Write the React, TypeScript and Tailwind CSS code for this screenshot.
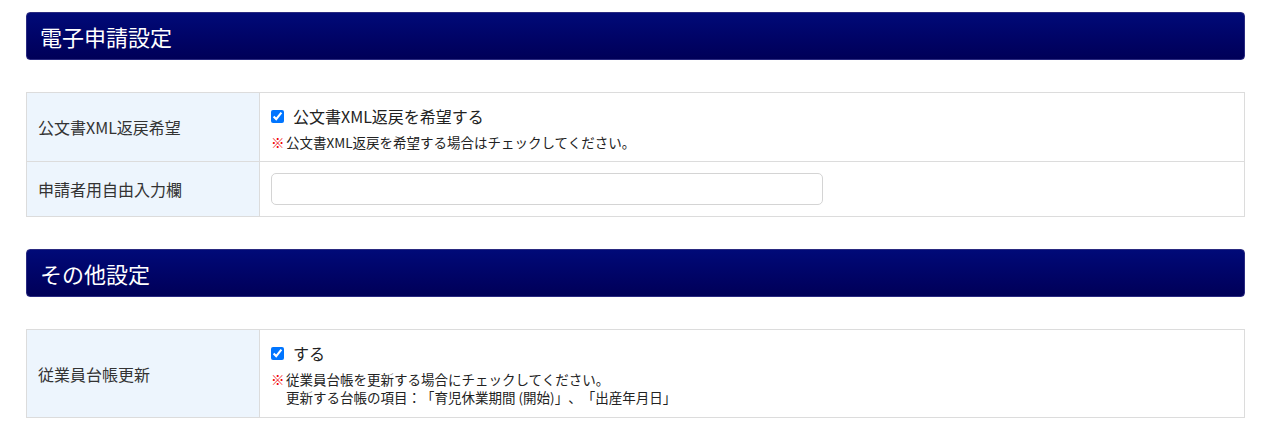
import React from "react";

const font = { fontFamily: '"Noto Sans CJK JP", "Noto Sans", sans-serif' };

function Header({ title }: { title: string }) {
  return (
    <div className="h-[48px] rounded-[4px] bg-gradient-to-b from-[#000a78] to-[#000058] border border-[#2a2a80] flex items-center pl-[13px]">
      <span className="text-white text-[22px] leading-none">{title}</span>
    </div>
  );
}

function Check({ label }: { label: string }) {
  return (
    <label className="flex items-center gap-[9px]">
      <input type="checkbox" defaultChecked className="w-[13px] h-[13px] m-0 accent-[#0075ff]" />
      <span className="text-[16px] text-[#222] leading-none">{label}</span>
    </label>
  );
}

function Mark() {
  return <span className="text-[#f00000] font-bold mr-[1.5px]">※</span>;
}

export default function App() {
  return (
    <div className="bg-white w-[1274px] h-[430px] pt-[12px] [text-spacing-trim:space-all]" style={font}>
      <div className="ml-[26px] w-[1219px]">
        <Header title="電子申請設定" />
        <div className="mt-[32px] border border-[#dcdcdc]">
          <div className="flex h-[69px] border-b border-[#dcdcdc]">
            <div className="w-[233px] shrink-0 bg-[#edf5fd] border-r border-[#dcdcdc] flex items-center pl-[11px] text-[16px] text-[#333]">
              公文書XML返戻希望
            </div>
            <div className="flex-1 pl-[11px] pt-[15px]">
              <Check label="公文書XML返戻を希望する" />
              <div className="mt-[9px] text-[13.5px] text-[#222] leading-[18px]">
                <Mark />公文書XML返戻を希望する場合はチェックしてください。
              </div>
            </div>
          </div>
          <div className="flex h-[54px]">
            <div className="w-[233px] shrink-0 bg-[#edf5fd] border-r border-[#dcdcdc] flex items-center pl-[11px] text-[16px] text-[#333]">
              申請者用自由入力欄
            </div>
            <div className="flex-1 pl-[11px] flex items-center">
              <input type="text" className="w-[552px] h-[32px] border border-[#d4d4d4] rounded-[5px] outline-none px-2" />
            </div>
          </div>
        </div>

        <div className="mt-[32px]">
          <Header title="その他設定" />
        </div>
        <div className="mt-[32px] border border-[#dcdcdc]">
          <div className="flex h-[87px]">
            <div className="w-[233px] shrink-0 bg-[#edf5fd] border-r border-[#dcdcdc] flex items-center pl-[11px] text-[16px] text-[#333]">
              従業員台帳更新
            </div>
            <div className="flex-1 pl-[11px] pt-[15px]">
              <Check label="する" />
              <div className="mt-[9px] text-[13.5px] text-[#222] leading-[18px]">
                <div>
                  <Mark />従業員台帳を更新する場合にチェックしてください。
                </div>
                <div className="pl-[15px]">更新する台帳の項目：「育児休業期間 (開始)」、「出産年月日」</div>
              </div>
            </div>
          </div>
        </div>
      </div>
    </div>
  );
}
